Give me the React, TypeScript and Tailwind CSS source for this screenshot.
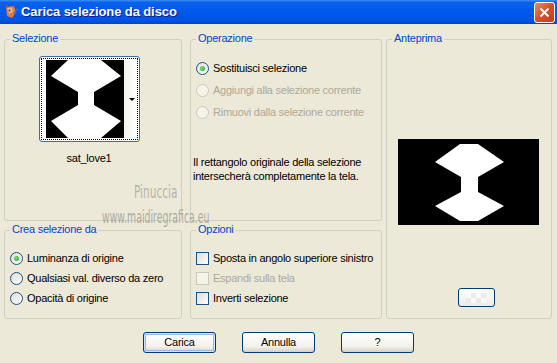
import type { ReactNode } from 'react';

function Group({ title, className, children }: { title: string; className?: string; children?: ReactNode }) {
    return (
        <fieldset className={`border border-[#D0D0BF] rounded-[3px] min-w-0 ${className ?? ''}`}>
            <legend className="ml-[5px] px-[2px] pb-[2px] leading-[13px] text-[#0046D5]">{title}</legend>
            {children}
        </fieldset>
    );
}

function Radio({ label, checked, disabled }: { label: string; checked?: boolean; disabled?: boolean }) {
    return (
        <div className="flex items-center gap-[4px]">
            <span
                className={`w-[13px] h-[13px] rounded-full border flex items-center justify-center shrink-0 ${
                    disabled
                        ? 'border-[#CAC8BB] bg-[#F5F4EA]'
                        : 'border-[#1C5180] bg-[linear-gradient(135deg,#DCDCD7,#FFFFFF)]'
                }`}
            >
                {checked && <span className="w-[5px] h-[5px] rounded-full bg-[radial-gradient(circle_at_40%_40%,#79E07A,#21A121)]" />}
            </span>
            <span className={disabled ? 'text-[#ACA899]' : 'text-black'}>{label}</span>
        </div>
    );
}

function Check({ label, disabled }: { label: string; disabled?: boolean }) {
    return (
        <div className="flex items-center gap-[4px]">
            <span
                className={`w-[13px] h-[13px] border shrink-0 ${
                    disabled
                        ? 'border-[#CAC8BB] bg-[#F5F4EA]'
                        : 'border-[#1C5180] bg-[linear-gradient(135deg,#DCDCD7,#FFFFFF)]'
                }`}
            />
            <span className={disabled ? 'text-[#ACA899]' : 'text-black'}>{label}</span>
        </div>
    );
}

function Button({ children, primary }: { children: ReactNode; primary?: boolean }) {
    return (
        <button
            className={`w-[73px] h-[21px] border border-[#003C74] rounded-[3px] bg-[linear-gradient(to_bottom,#FFFFFF,#F3F2EE_70%,#D6D0C5)] text-black leading-none ${
                primary ? 'shadow-[inset_0_0_0_1px_#CEE7FF,inset_0_0_0_2px_#98B8EA]' : ''
            }`}
        >
            {children}
        </button>
    );
}

function Hourglass({ w, h, points }: { w: number; h: number; points: string }) {
    return (
        <svg width={w} height={h} viewBox={`0 0 ${w} ${h}`} className="block">
            <rect width={w} height={h} fill="#000" />
            <polygon points={points} fill="#fff" />
        </svg>
    );
}

export default function App() {
    return (
        <div className="relative w-[557px] h-[363px] overflow-hidden bg-[#ECE9D8] font-['Liberation_Sans',Arial,sans-serif] text-[11px] tracking-[-0.25px] select-none">
            {/* title bar */}
            <div className="h-[24px] flex items-center bg-[linear-gradient(to_bottom,#3D8DF5_0%,#0A62EA_10%,#0058EE_45%,#0053E4_85%,#0043C8_100%)]">
                <svg width="16" height="16" viewBox="0 0 16 16" className="ml-[3px]">
                    <path d="M3 3 L11 2 L13 8 L9 14 L4 12 Z" fill="#E07A3A" />
                    <path d="M4 4 L9 3.5 L10 8 L6 10 Z" fill="#F5B37A" />
                    <circle cx="6.5" cy="6.5" r="1" fill="#2A3D8F" />
                    <path d="M10 9 L15 4 L15.5 5 L11 10 Z" fill="#3A6FD8" />
                    <path d="M2 2 L5 1 L4 4 Z" fill="#C8402A" />
                </svg>
                <span className="ml-[2px] text-white font-bold text-[13px] tracking-[-0.1px] [text-shadow:1px_1px_#0A1883]">
                    Carica selezione da disco
                </span>
                <div className="ml-auto mr-[2px] w-[21px] h-[21px] rounded-[3px] border border-white bg-[linear-gradient(135deg,#E88A6C,#D6512C_50%,#C0401C)] flex items-center justify-center">
                    <svg width="11" height="11" viewBox="0 0 11 11">
                        <path d="M1.5 1.5 L9.5 9.5 M9.5 1.5 L1.5 9.5" stroke="#fff" strokeWidth="2" />
                    </svg>
                </div>
            </div>

            {/* body */}
            <div className="pl-[4px] pt-[8px] flex">
                <div className="grid grid-cols-[178px_192px] grid-rows-[189px_96px] gap-x-[8px] gap-y-[2px]">
                    <Group title="Selezione" className="h-[189px]">
                        <div className="pl-[33px] w-[135px] flex flex-col items-center">
                            <div className="mt-[9px] w-[101px] h-[86px] border border-[#3A6EA5] rounded-[3px] bg-white p-[1px]">
                                <div className="h-full border border-dotted border-black flex items-stretch pl-[4px] py-[1px]">
                                    <Hourglass
                                        w={78}
                                        h={78}
                                        points="22,0 55,0 75,16 48,32 48,45 75,61 55,78 22,78 5,61 32,45 32,32 5,16"
                                    />
                                    <div className="flex-1 bg-[linear-gradient(to_right,#F4F3EE,#FFFFFF)] flex items-center justify-end pr-[2px]">
                                        <span className="w-0 h-0 border-l-[3px] border-r-[3px] border-t-[3px] border-l-transparent border-r-transparent border-t-black" />
                                    </div>
                                </div>
                            </div>
                            <div className="mt-[10px] leading-[13px]">sat_love1</div>
                        </div>
                    </Group>

                    <Group title="Operazione" className="h-[189px]">
                        <div className="pl-[5px] pt-[10px] flex flex-col">
                            <div className="h-[22px] flex items-center"><Radio label="Sostituisci selezione" checked /></div>
                            <div className="h-[22px] flex items-center"><Radio label="Aggiungi alla selezione corrente" disabled /></div>
                            <div className="h-[22px] flex items-center"><Radio label="Rimuovi dalla selezione corrente" disabled /></div>
                        </div>
                        <div className="mt-[32px] pl-[2px] leading-[14px]">
                            <div>Il rettangolo originale della selezione</div>
                            <div>intersecherà completamente la tela.</div>
                        </div>
                    </Group>

                    <Group title="Crea selezione da" className="h-[96px]">
                        <div className="pl-[5px] pt-[10px] flex flex-col">
                            <div className="h-[20px] flex items-center"><Radio label="Luminanza di origine" checked /></div>
                            <div className="h-[20px] flex items-center"><Radio label="Qualsiasi val. diverso da zero" /></div>
                            <div className="h-[20px] flex items-center"><Radio label="Opacità di origine" /></div>
                        </div>
                    </Group>

                    <Group title="Opzioni" className="h-[96px]">
                        <div className="pl-[5px] pt-[10px] flex flex-col">
                            <div className="h-[20px] flex items-center"><Check label="Sposta in angolo superiore sinistro" /></div>
                            <div className="h-[20px] flex items-center"><Check label="Espandi sulla tela" disabled /></div>
                            <div className="h-[20px] flex items-center"><Check label="Inverti selezione" /></div>
                        </div>
                    </Group>
                </div>

                <Group title="Anteprima" className="ml-[4px] w-[166px] h-[287px]">
                    <div className="flex flex-col items-center">
                        <div className="mt-[92px] ml-[-2px]">
                            <Hourglass
                                w={141}
                                h={86}
                                points="62,5 80,5 106,23 80,38 80,53 106,67 80,82 62,82 37,67 63,53 63,38 37,23"
                            />
                        </div>
                        <div className="mt-[63px] ml-[14px] w-[37px] h-[19px] border border-[#003C74] rounded-[3px] bg-[linear-gradient(to_bottom,#FFFFFF,#ECEBE6)] flex items-center justify-center">
                            <div className="grid grid-cols-4 grid-rows-2 w-[20px] h-[10px] opacity-60">
                                <span className="bg-white" /><span className="bg-[#E4E4E4]" /><span className="bg-white" /><span className="bg-[#E4E4E4]" />
                                <span className="bg-[#E4E4E4]" /><span className="bg-white" /><span className="bg-[#E4E4E4]" /><span className="bg-white" />
                            </div>
                        </div>
                    </div>
                </Group>
            </div>

            {/* buttons */}
            <div className="mt-[13px] flex justify-center gap-[26px]">
                <Button primary>Carica</Button>
                <Button>Annulla</Button>
                <Button>?</Button>
            </div>

            {/* watermark */}
            <div className="absolute left-[134px] top-[185px] text-[17px] leading-[15px] tracking-normal text-[#8C8C8C]/60 font-['DejaVu_Sans',sans-serif] scale-x-[0.62] origin-left">
                Pinuccia
            </div>
            <div className="absolute left-[102px] top-[211px] text-[18px] leading-[11px] tracking-normal text-[#7C7C7C]/60 font-['DejaVu_Sans',sans-serif] scale-x-[0.52] origin-left">
                www.maidiregrafica.eu
            </div>
        </div>
    );
}
